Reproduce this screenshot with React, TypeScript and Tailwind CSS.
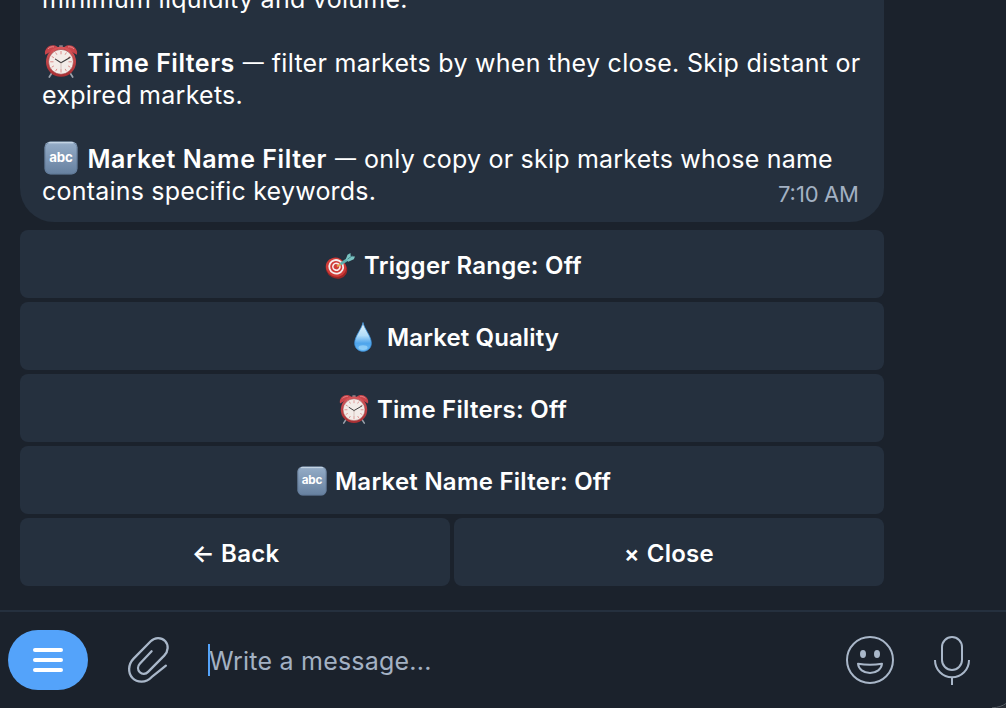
import React from 'react';

interface IconProps {
  className?: string;
}

const AlarmClockIcon: React.FC<IconProps> = ({ className }) => (
  <svg viewBox="0 0 34 34" className={className} fill="none">
    <defs>
      <linearGradient id="clockRim" x1="0" y1="0" x2="0" y2="1">
        <stop offset="0" stopColor="#d8565a" />
        <stop offset="1" stopColor="#a92f33" />
      </linearGradient>
    </defs>
    <path d="M8.5 27.5 5.3 32.5M25.5 27.5l3.2 5" stroke="#9aa1aa" strokeWidth="1.7" strokeLinecap="round" />
    <path d="M15.2.8h3.6v3.6h-3.6z" fill="#8d8088" />
    <path d="M1.2 10.2C-.4 5.2 4.5.2 9.6.7c2 .2 3.6 1 4.6 2.4z" fill="#c9444a" />
    <path d="M32.8 10.2C34.4 5.2 29.5.2 24.4.7c-2 .2-3.6 1-4.6 2.4z" fill="#c9444a" />
    <path d="M4 4.4c1.6-1.8 4-2.5 6-2M30 4.4c-1.6-1.8-4-2.5-6-2" stroke="#e58a8b" strokeWidth="1" />
    <circle cx="17" cy="17.3" r="15" fill="url(#clockRim)" />
    <circle cx="17" cy="17.3" r="12.4" fill="#f3ece8" stroke="#8f3033" strokeWidth=".5" />
    <g stroke="#d98482" strokeWidth=".9">
      <path d="M17 6.5v3.3M17 24.8v3.3M6.2 17.3h3.3M24.5 17.3h3.3" />
      <path d="m11.6 8 1.3 2.2M22.4 8l-1.3 2.2M11.6 26.6l1.3-2.2M22.4 26.6l-1.3-2.2M7.7 11.9l2.2 1.3M26.3 11.9l-2.2 1.3M7.7 22.7l2.2-1.3M26.3 22.7l-2.2-1.3" />
    </g>
    <path d="M17 18.2 11.4 14.6M17 18.2l9-5.2" stroke="#3d3c3c" strokeWidth="1.1" strokeLinecap="round" />
    <path d="M17 18v7.5" stroke="#c9b0aa" strokeWidth=".7" />
  </svg>
);

const AbcIcon: React.FC<IconProps> = ({ className }) => (
  <svg viewBox="0 0 34 34" className={className}>
    <defs>
      <linearGradient id="abcTile" x1="0" y1="0" x2="0" y2="1">
        <stop offset="0" stopColor="#a8bdd3" />
        <stop offset=".1" stopColor="#91a9c4" />
        <stop offset="1" stopColor="#66809f" />
      </linearGradient>
    </defs>
    <rect x=".5" y=".5" width="33" height="33" rx="6" fill="url(#abcTile)" />
    <rect x="1.2" y="1.2" width="31.6" height="31.6" rx="5.4" fill="none" stroke="#5d7593" strokeOpacity=".55" />
    <path d="M5 1.6h24" stroke="#c3d3e3" strokeWidth="1.2" strokeLinecap="round" />
    <text x="17" y="20.6" textAnchor="middle" fontFamily="Inter, sans-serif" fontSize="13.3" fontWeight="700" fill="#fff" letterSpacing="-.2">
      abc
    </text>
  </svg>
);

const TargetIcon: React.FC<IconProps> = ({ className }) => (
  <svg viewBox="0 0 30 26" className={className} fill="none">
    <ellipse cx="11.5" cy="15.8" rx="11" ry="9.6" transform="rotate(28 11.5 15.8)" fill="#9c2626" />
    <ellipse cx="11" cy="14.2" rx="10.4" ry="9.4" transform="rotate(28 11 14.2)" fill="#cf3b38" />
    <ellipse cx="11.2" cy="13.8" rx="7" ry="6.7" transform="rotate(28 11.2 13.8)" stroke="#f6eeee" strokeWidth="1.8" />
    <ellipse cx="11.4" cy="13.8" rx="3.6" ry="3.4" transform="rotate(28 11.4 13.8)" stroke="#f6eeee" strokeWidth="1.6" />
    <path d="m12 13.6 4.6-3.2" stroke="#e0a64e" strokeWidth="1.8" />
    <path d="m15.6 11.1 8.2-5.6" stroke="#5fb0ae" strokeWidth="2.8" />
    <path d="m20.8 6.3 1.7-4.5 3-1.8.2 3.3 4.3.3-1.2 2.6-5.5 2.6z" fill="#79c3c2" />
    <path d="m22.5 6.2 5-3.6" stroke="#39797c" strokeWidth=".8" />
  </svg>
);

const DropletIcon: React.FC<IconProps> = ({ className }) => (
  <svg viewBox="0 0 18 30" className={className}>
    <defs>
      <linearGradient id="dropFill" x1="0" y1="0" x2="0" y2="1">
        <stop offset="0" stopColor="#e4f3fb" />
        <stop offset=".45" stopColor="#b2ddf8" />
        <stop offset=".72" stopColor="#4fa5ec" />
        <stop offset="1" stopColor="#68b8f5" />
      </linearGradient>
    </defs>
    <path d="M9 .5C10 6.5 17.3 14 17.3 21.2 17.3 26 13.6 29.3 9 29.3S.7 26 .7 21.2C.7 14 8 6.5 9 .5Z" fill="url(#dropFill)" stroke="#3d93dd" strokeWidth=".8" />
    <ellipse cx="9" cy="25.6" rx="4.5" ry="2.3" fill="#a3dafa" opacity=".65" />
  </svg>
);

const PaperclipIcon: React.FC<IconProps> = ({ className }) => (
  <svg viewBox="0 0 44 50" className={className} fill="none" stroke="currentColor" strokeWidth="2.3" strokeLinecap="round" strokeLinejoin="round">
    <path d="M24.6 16.3 13 28.5c-2.6 2.8-2.5 6.4-.2 8.7 2.4 2.3 5.9 2.1 8.3-.3L37.2 20.6c4.3-4.4 4.6-10.6.9-14.6-3.9-4-10.2-4-14.4.3L6.6 23.6c-5.600 5.800-5.900 14.500-1.100 19.400 4.900 5 13.400 5 19-.800L38.900 30.700" />
  </svg>
);

const SmileIcon: React.FC<IconProps> = ({ className }) => (
  <svg viewBox="0 0 48 48" className={className} fill="none" stroke="currentColor" strokeWidth="2">
    <circle cx="24" cy="24" r="23" />
    <ellipse cx="17" cy="18" rx="3" ry="4" fill="currentColor" stroke="none" />
    <ellipse cx="31" cy="18" rx="3" ry="4" fill="currentColor" stroke="none" />
    <path d="M12 27.7c8 1.5 16 1.5 24 0C35.6 33 30.5 37 24 37s-11.6-4-12-9.3Z" strokeLinejoin="round" />
  </svg>
);

const MicIcon: React.FC<IconProps> = ({ className }) => (
  <svg viewBox="0 0 36 50" className={className} fill="none" stroke="currentColor" strokeWidth="2">
    <rect x="8" y="2" width="20" height="33" rx="10" />
    <path d="M1 25c0 9.8 7.5 17.3 17 17.3s17-7.5 17-17.3M18 42v8" />
  </svg>
);

interface KeyboardButtonProps {
  children: React.ReactNode;
}

const KeyboardButton: React.FC<KeyboardButtonProps> = ({ children }) => (
  <button className="flex h-[68px] flex-1 items-center justify-center rounded-lg bg-[#25303e] pt-1 text-[24px] font-semibold tracking-[0.25px] text-white">
    {children}
  </button>
);

const Dash: React.FC = () => (
  <span className="mr-[7px] ml-2 w-[22px] text-[21px]">—</span>
);

const App: React.FC = () => {
  return (
    <div className="relative flex h-[708px] w-[1006px] flex-col overflow-hidden bg-[#1b222c] font-['Inter',sans-serif]">
      <main className="flex h-[610px] w-[884px] shrink-0 flex-col overflow-hidden pl-5">
        <div className="h-[222px] shrink-0 overflow-hidden rounded-b-[34px] bg-[#25303e] px-[22px] text-[25px] leading-8 whitespace-nowrap text-white">
          <p className="-mt-[17px] mb-8 tracking-[0.27px]">minimum liquidity and volume.</p>
          <div className="mb-8">
            <div className="flex">
              <AlarmClockIcon className="-mt-[3px] mr-[9px] -mb-px ml-[2px] h-[35px] w-[34px] shrink-0" />
              <span className="font-semibold tracking-[0.5px]">Time Filters</span>
              <Dash />
              <span className="tracking-[0.28px]">filter markets by when they close. Skip distant or</span>
            </div>
            <div className="tracking-[0.27px]">expired markets.</div>
          </div>
          <div>
            <div className="flex">
              <AbcIcon className="-mt-[2px] mr-[10px] ml-[1.5px] h-[34px] w-[34px] shrink-0" />
              <span className="font-semibold tracking-[0.55px]">Market Name Filter</span>
              <Dash />
              <span className="tracking-[0.22px]">only copy or skip markets whose name</span>
            </div>
            <div className="flex justify-between">
              <span className="tracking-[0.21px]">contains specific keywords.</span>
              <time className="mt-[4px] mr-[3px] text-[22px] leading-[31px] [word-spacing:-1px] text-[#a3b1c3]">7:10 AM</time>
            </div>
          </div>
        </div>

        <div className="mt-2 flex flex-col gap-1">
          <div className="flex">
            <KeyboardButton>
              <TargetIcon className="mr-[9px] ml-[3px] h-[26px] w-[30px]" />
              <span>Trigger Range: Off</span>
            </KeyboardButton>
          </div>
          <div className="flex">
            <KeyboardButton>
              <DropletIcon className="mr-[15px] mb-[2px] ml-[9px] h-[30px] w-[18px]" />
              <span className="tracking-[0.12px]">Market Quality</span>
            </KeyboardButton>
          </div>
          <div className="flex">
            <KeyboardButton>
              <AlarmClockIcon className="mr-2 mb-[2px] ml-[2px] h-[31px] w-[30px]" />
              <span>Time Filters: Off</span>
            </KeyboardButton>
          </div>
          <div className="flex">
            <KeyboardButton>
              <AbcIcon className="mr-2 mb-[2px] ml-[4px] h-[30px] w-[30px]" />
              <span>Market Name Filter: Off</span>
            </KeyboardButton>
          </div>
          <div className="flex gap-1">
            <KeyboardButton>
              <span className="pl-px">← Back</span>
            </KeyboardButton>
            <KeyboardButton>
              <span className="mr-[7px] pt-px text-[23px]">×</span>
              <span>Close</span>
            </KeyboardButton>
          </div>
        </div>
      </main>

      <footer className="flex h-[98px] shrink-0 items-center border-t-2 border-[#25303e] pl-2 text-[#a9b7c9]">
        <button className="flex h-[60px] w-20 flex-col items-center justify-center gap-[6.5px] rounded-[30px] bg-[#54a3fa]">
          <span className="h-[3.5px] w-[30px] rounded-full bg-white" />
          <span className="h-[3.5px] w-[30px] rounded-full bg-white" />
          <span className="h-[3.5px] w-[30px] rounded-full bg-white" />
        </button>
        <PaperclipIcon className="ml-[39px] h-[50px] w-11" />
        <span className="ml-[37px] h-8 w-[2px] bg-[#54a3fa]" />
        <span className="-ml-px flex-1 pt-[3px] text-[25px] tracking-[0.22px] text-[#a3b1c3]">Write a message...</span>
        <SmileIcon className="h-12 w-12" />
        <MicIcon className="mr-9 ml-10 h-[50px] w-9" />
      </footer>

      {/* rounded window corner */}
      <svg viewBox="0 0 14 6" className="absolute right-0 bottom-0 h-[6px] w-[14px]" fill="none">
        <path d="M14 2.5C11 4.5 7 6 2 6h12z" fill="#2b3038" />
        <path d="M14 1.5C10.5 4 6.5 5.5 0 5.8" stroke="#565c64" />
      </svg>
    </div>
  );
};

export default App;
